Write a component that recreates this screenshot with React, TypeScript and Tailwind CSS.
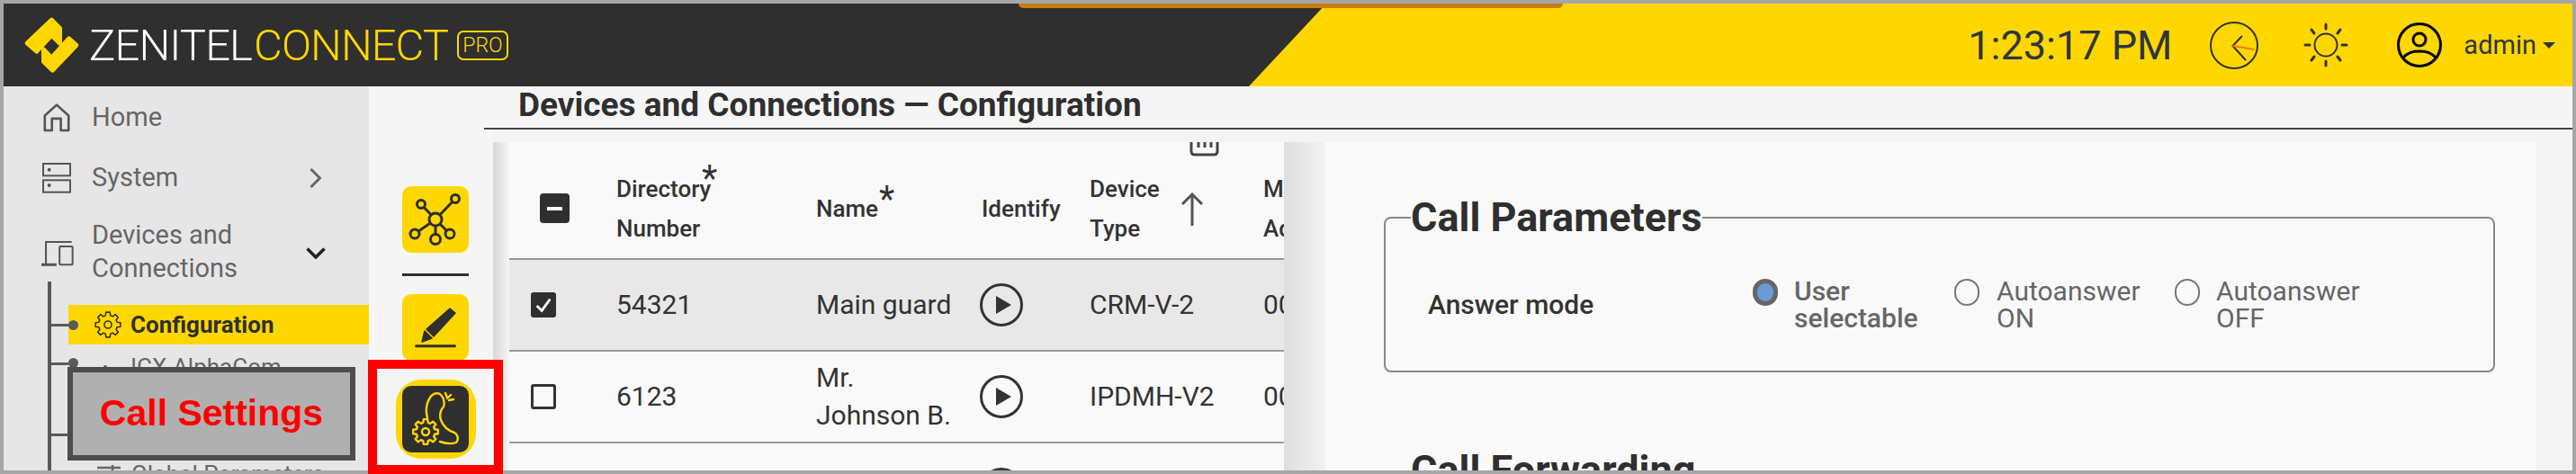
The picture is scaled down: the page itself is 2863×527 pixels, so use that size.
import React from "react";

function gearPath(cx: number, cy: number, ro: number, ri: number, teeth: number) {
  const pts: string[] = [];
  const step = (Math.PI * 2) / teeth;
  for (let i = 0; i < teeth; i++) {
    const a = i * step - Math.PI / 2;
    const seq: [number, number][] = [
      [ri, a - step * 0.34],
      [ro, a - step * 0.2],
      [ro, a + step * 0.2],
      [ri, a + step * 0.34],
    ];
    seq.forEach(([r, t]) => pts.push(`${(cx + r * Math.cos(t)).toFixed(2)} ${(cy + r * Math.sin(t)).toFixed(2)}`));
  }
  return "M" + pts.join(" L") + " Z";
}

const Logo = () => (
  <svg viewBox="0 0 240 228" width={80} height={76} fill="#ffd700" stroke="#ffd700" strokeWidth={14} strokeLinejoin="round" className="flex-none">
    <path d="M30 108 L112 30 L140 58 V110 L112 82 L62 136 Z" />
    <path d="M85 128 L112 156 L170 92 L195 115 L115 199 L85 170 Z" />
  </svg>
);

const ClockIcon = () => (
  <svg viewBox="0 0 54 53" width={54} height={53} fill="none" className="flex-none">
    <ellipse cx={27} cy={26.5} rx={26} ry={25.5} stroke="#333" strokeWidth={2} />
    <path d="M36 16 L25.5 27 L40 43" stroke="#333" strokeWidth={2} />
    <path d="M25.5 27 L49 31" stroke="#f07a10" strokeWidth={2} />
  </svg>
);

const SunIcon = () => (
  <svg viewBox="0 0 50 50" width={50} height={50} fill="none" stroke="#333" strokeLinecap="round" className="flex-none">
    <circle cx={25} cy={25} r={12.5} strokeWidth={2} />
    <path strokeWidth={3} d="M25 2 V7 M25 43 V48 M2 25 H7 M43 25 H48 M9 8 L12 12 M38 38 L41 42 M41 8 L38 12 M12 38 L9 42" />
  </svg>
);

const UserIcon = () => (
  <svg viewBox="0 0 50 50" width={50} height={50} fill="none" stroke="#000" strokeWidth={3} className="flex-none">
    <ellipse cx={25} cy={25} rx={23.5} ry={23.5} />
    <circle cx={25} cy={19} r={7} />
    <path d="M6 40 C12 33 18 32 25 32 C32 32 38 33 44 40" />
  </svg>
);

const HomeIcon = () => (
  <svg viewBox="30 24 96 100" width={32} height={33} fill="none" stroke="#555" strokeWidth={8} strokeLinejoin="round">
    <path d="M38 118 V68 L78 32 L118 68 V118 H92 V78 H62 V118 Z" />
  </svg>
);

const ServerIcon = () => (
  <svg viewBox="26 222 102 108" width={34} height={36} fill="none" stroke="#555" strokeWidth={6}>
    <rect x={32} y={228} width={90} height={40} />
    <rect x={32} y={283} width={90} height={40} />
    <circle cx={52} cy={248} r={3} fill="#555" />
    <circle cx={52} cy={300} r={3} fill="#555" />
  </svg>
);

const DevicesIcon = () => (
  <svg viewBox="22 484 110 86" width={37} height={29} fill="none" stroke="#555" strokeWidth={6}>
    <path d="M40 562 V490 H125" />
    <path d="M25 565 H75" strokeWidth={9} />
    <rect x={85} y={505} width={43} height={60} rx={3} />
  </svg>
);

const Chevron = ({ down }: { down?: boolean }) =>
  down ? (
    <svg viewBox="0 0 22 13" width={22} height={13} fill="none" stroke="#222" strokeWidth={3.5}>
      <path d="M1.5 1.5 L11 11 L20.5 1.5" />
    </svg>
  ) : (
    <svg viewBox="0 0 13 22" width={13} height={22} fill="none" stroke="#666" strokeWidth={3}>
      <path d="M1.5 1 L11.5 11 L1.5 21" />
    </svg>
  );

const GearIcon = ({ color = "#3a3000", size = 30 }: { color?: string; size?: number }) => (
  <svg viewBox="0 0 30 30" width={size} height={size} fill="none" stroke={color} strokeWidth={1.6} strokeLinejoin="round" className="flex-none">
    <path d={gearPath(15, 15, 14, 10.5, 8)} />
    <circle cx={15} cy={15} r={4} />
  </svg>
);

const SlidersIcon = () => (
  <svg viewBox="0 0 26 20" width={26} height={20} fill="none" stroke="#666" strokeWidth={2.5} className="flex-none">
    <path d="M0 3 H26 M0 11 H26 M17 0 V7 M9 8 V15" />
  </svg>
);

const NetworkIcon = () => (
  <svg viewBox="0 0 74 74" width={74} height={74} fill="none" stroke="#2f2f2f" strokeWidth={3}>
    <path d="M37 37 L21 20 M37 37 L59 14 M37 37 L14 53 M37 37 L53 53 M37 37 V59" />
    <circle cx={37} cy={37} r={7} fill="#ffd700" />
    <circle cx={21} cy={20} r={4.5} fill="#ffd700" />
    <circle cx={59} cy={14} r={4.5} fill="#ffd700" />
    <circle cx={14} cy={53} r={5} fill="#ffd700" />
    <circle cx={53} cy={53} r={5} fill="#ffd700" />
    <circle cx={37} cy={59} r={5.5} fill="#ffd700" />
  </svg>
);

const PencilIcon = () => (
  <svg viewBox="0 0 74 74" width={74} height={74} fill="#2f2f2f" stroke="#2f2f2f" strokeWidth={1.5} strokeLinejoin="round">
    <path d="M22 53 L25 41 L33 49 Z" />
    <path d="M27 39 L53 16 L59 21 L35 47 Z" />
    <path d="M15 57 H59 V58.5 H15 Z" />
  </svg>
);

const PhoneGearIcon = () => (
  <svg viewBox="0 0 74 74" width={74} height={74} fill="none" stroke="#ffd700" strokeWidth={2.4} strokeLinecap="round" strokeLinejoin="round">
    <path d="M28 36 C26 28 27 19 31 13 C34 8 40 7 43 10 C47 14 47 20 46 23 C42 28 41 32 43 38 C46 46 52 50 58 52 C62 54 63 60 60 63 C55 65 48 64 42 62" />
    <path d="M48 8 L50 13 M54 10 L50 14 M57 15 L52 16" />
    <path d={gearPath(26, 51, 14, 10.5, 8)} />
    <circle cx={26} cy={51} r={4} />
  </svg>
);

const Play = () => (
  <svg viewBox="0 0 48 48" width={48} height={48} fill="none">
    <circle cx={24} cy={24} r={22.5} stroke="#333" strokeWidth={3} />
    <path d="M18 14 L35 24 L18 34 Z" fill="#333" />
  </svg>
);

const Box = ({ checked }: { checked?: boolean }) =>
  checked ? (
    <span className="flex h-[28px] w-[28px] items-center justify-center rounded-[3px] bg-[#2f2f2f]">
      <svg viewBox="0 0 24 24" width={22} height={22} fill="none" stroke="#fff" strokeWidth={3}>
        <path d="M4 13 L10 19 L20 5" />
      </svg>
    </span>
  ) : (
    <span className="block h-[28px] w-[28px] rounded-[3px] border-[3px] border-[#333] bg-[#f9f9f9]" />
  );

const Radio = ({ on }: { on?: boolean }) =>
  on ? (
    <span className="mt-[1px] block h-[30px] w-[28px] flex-none rounded-full border-[5px] border-[#666] bg-[#6a9bd8]" />
  ) : (
    <span className="mt-[1px] block h-[30px] w-[28px] flex-none rounded-full border-2 border-[#777] bg-[#f9f9f9]" />
  );

const rowGrid = "grid grid-cols-[119px_222px_184px_120px_193px_1fr] items-center";

function TableRow({ checked, name, dir, type, shaded }: { checked?: boolean; name: React.ReactNode; dir: string; type: string; shaded?: boolean }) {
  return (
    <div className={`${rowGrid} h-[102px] flex-none border-b-[2px] border-[#999] text-[30px] leading-[42px] text-[#333] ${shaded ? "bg-[#e8e8e8]" : ""}`}>
      <div className="pl-[24px]">
        <Box checked={checked} />
      </div>
      <div>{dir}</div>
      <div>{name}</div>
      <div className="-ml-[2px]">
        <Play />
      </div>
      <div className="whitespace-nowrap">{type}</div>
      <div className="whitespace-nowrap">00</div>
    </div>
  );
}

export default function App() {
  return (
    <div className="relative h-[527px] w-[2863px] overflow-hidden bg-[#f5f5f5] font-['Roboto',sans-serif]">
      <div className="flex h-full w-full flex-col overflow-hidden border-4 border-[#a6a6a6]">
        {/* Header */}
        <header className="relative flex h-[92px] flex-none items-center bg-[#ffd700]">
          <div className="flex h-full w-[1470px] flex-none items-center bg-[#2f2f2f] pl-[16px] [clip-path:polygon(0_0,100%_0,1384px_100%,0_100%)]">
            <Logo />
            <span className="-ml-[1px] text-[49px] font-light leading-none tracking-[-0.9px] text-white">ZENITEL</span>
            <span className="ml-[2px] text-[49px] font-light leading-none tracking-[-1px] text-[#ffd700]">CONNECT</span>
            <span className="ml-[10px] flex h-[33px] w-[57px] items-center justify-center rounded-[7px] border-2 border-[#ffd700] text-[23px] font-light leading-none text-[#ffd700]">PRO</span>
          </div>
          <div className="absolute left-[1128px] top-0 h-[5px] w-[605px] rounded-b-[8px] bg-[#c97c0c]" />
          <div className="ml-auto flex items-center pr-[19px] text-[#2f3640]">
            <span className="whitespace-nowrap text-[45px] leading-none">1:23:17 PM</span>
            <span className="ml-[42px]">
              <ClockIcon />
            </span>
            <span className="ml-[50px]">
              <SunIcon />
            </span>
            <span className="ml-[54px]">
              <UserIcon />
            </span>
            <span className="ml-[24px] text-[29px] leading-none">admin</span>
            <span className="ml-[7px] h-0 w-0 border-x-[7px] border-t-[7px] border-x-transparent border-t-[#2f3640]" />
          </div>
        </header>

        <div className="flex min-h-0 flex-1">
          {/* Sidebar */}
          <aside className="flex w-[406px] flex-none flex-col bg-[#e6e6e6] text-[29px] leading-[37px] text-[#666]">
            <div className="flex h-[68px] flex-none items-center pl-[40px]">
              <span className="flex w-[38px] justify-center"><HomeIcon /></span>
              <span className="ml-[20px]">Home</span>
            </div>
            <div className="flex h-[67px] flex-none items-center pl-[40px]">
              <span className="flex w-[38px] justify-center"><ServerIcon /></span>
              <span className="ml-[20px]">System</span>
              <span className="ml-auto mr-[53px] flex"><Chevron /></span>
            </div>
            <div className="flex h-[82px] flex-none items-start pl-[40px] pt-[12px]">
              <span className="mt-[24px] flex w-[38px] justify-center"><DevicesIcon /></span>
              <span className="ml-[20px]">Devices and<br />Connections</span>
              <span className="ml-auto mr-[48px] mt-[32px] flex"><Chevron down /></span>
            </div>
            <div className="ml-[49px] flex-1 border-l-4 border-[#5a5a5a] pt-[26px]">
              <div className="flex h-[44px] items-center">
                <span className="h-[3px] w-[19px] bg-[#5a5a5a]" />
                <span className="flex h-full flex-1 items-center bg-[#ffd700]">
                  <span className="h-[11px] w-[11px] flex-none rounded-full bg-[#5a5a5a]" />
                  <span className="ml-[18px]"><GearIcon /></span>
                  <span className="ml-[10px] text-[26px] font-bold text-[#2f2f2f]">Configuration</span>
                </span>
              </div>
              <div className="flex h-[78px] items-start pt-[15px]">
                <span className="mt-[5px] h-[3px] w-[19px] bg-[#5a5a5a]" />
                <span className="h-[11px] w-[11px] flex-none rounded-full bg-[#5a5a5a]" />
                <span className="ml-[28px] mt-[8px] h-[4px] w-[4px] flex-none rounded-full bg-[#5a5a5a]" />
                <span className="-mt-[8px] ml-[26px] text-[26px]">ICX-AlphaCom</span>
              </div>
              <div className="flex h-[44px] items-center">
                <span className="h-[3px] w-[19px] bg-[#5a5a5a]" />
              </div>
              <div className="flex h-[44px] items-center pl-[51px] text-[26px]">
                <span className="w-[38px]"><SlidersIcon /></span>
                <span>Global Parameters</span>
              </div>
            </div>
          </aside>

          {/* Toolbar */}
          <nav className="flex w-[128px] flex-none flex-col items-center pl-[20px] pt-[111px]">
            <div className="h-[74px] w-[74px] flex-none rounded-[10px] bg-[#ffd700]"><NetworkIcon /></div>
            <div className="mt-[23px] h-[3px] w-[74px] flex-none bg-[#2f2f2f]" />
            <div className="mt-[20px] h-[74px] w-[74px] flex-none rounded-[10px] bg-[#ffd700]"><PencilIcon /></div>
            <div className="mt-[21px] flex h-[88px] w-[89px] flex-none items-center justify-center rounded-[28px] bg-[#ffd700]">
              <div className="h-[74px] w-[74px] rounded-[10px] bg-[#2f2f2f]"><PhoneGearIcon /></div>
            </div>
          </nav>

          {/* Main */}
          <main className="flex min-w-0 flex-1 flex-col">
            <div className="h-[48px] flex-none border-b-[2px] border-[#444] pl-[38px] shadow-[inset_0_-2px_0_#fff]">
              <h1 className="text-[37px] font-bold leading-[42px] text-[#2f2f2f]">Devices and Connections — Configuration</h1>
            </div>
            <div className="ml-[10px] flex min-h-0 flex-1 flex-col">
              <div className="h-[14px] flex-none bg-[#f3f3f3]" />
              <div className="flex min-h-0 flex-1">
                <div className="w-[18px] flex-none bg-gradient-to-r from-[#d8d8d8] to-[#f4f4f4]" />
                {/* Table */}
                <section className="flex w-[861px] flex-none flex-col overflow-hidden bg-[#f9f9f9]">
                  <div className={`${rowGrid} relative h-[131px] flex-none border-b-[2px] border-[#999] pt-[18px] text-[26px] font-medium leading-[44px] text-[#333]`}>
                    <div className="pl-[34px]">
                      <span className="flex h-[33px] w-[33px] items-center justify-center rounded-[4px] bg-[#2f2f2f]">
                        <span className="h-[4px] w-[17px] bg-white" />
                      </span>
                    </div>
                    <div className="relative">
                      Directory<br />Number
                      <span className="absolute left-[95px] -top-[11px] text-[40px] font-normal leading-[44px]">*</span>
                    </div>
                    <div className="relative">
                      Name
                      <span className="absolute left-[70px] -top-[10px] text-[40px] font-normal leading-[44px]">*</span>
                    </div>
                    <div>Identify</div>
                    <div className="flex items-center">
                      <span>Device<br />Type</span>
                    </div>
                    <div className="whitespace-nowrap">
                      <span className="block w-[23px] overflow-hidden">Ma</span>
                      <span className="block w-[23px] overflow-hidden">Ad</span>
                    </div>
                    <svg viewBox="0 0 33 16" width={33} height={16} fill="none" stroke="#444" strokeWidth={3} className="absolute left-[756px] top-0">
                      <path d="M2 0 V10 Q2 14 6 14 H27 Q31 14 31 10 V0 M10 0 V6 M17 0 V6 M24 0 V6" />
                    </svg>
                    <svg viewBox="0 0 26 38" width={26} height={38} fill="none" stroke="#555" strokeWidth={3} className="absolute left-[746px] top-[56px]">
                      <path d="M13 37 V2 M2 13 L13 2 L24 13" />
                    </svg>
                  </div>
                  <TableRow shaded checked dir="54321" name="Main guard" type="CRM-V-2" />
                  <TableRow dir="6123" name={<>Mr.<br />Johnson B.</>} type="IPDMH-V2" />
                  <div className={`${rowGrid} h-[102px] flex-none`}>
                    <div /><div /><div />
                    <div className="-ml-[2px]"><Play /></div>
                  </div>
                </section>
                <div className="w-[46px] flex-none bg-gradient-to-r from-[#dedede] to-[#f2f2f2]" />
                {/* Settings */}
                <section className="w-[1345px] flex-none overflow-hidden bg-[#f9f9f9] pl-[65px] pr-[45px] pt-[60px]">
                  <fieldset className="h-[196px] rounded-[8px] border-2 border-[#888] pl-[47px] pr-[10px]">
                    <legend className="-ml-[19px] text-[45px] font-bold leading-[48px] text-[#2f2f2f]">Call Parameters</legend>
                    <div className="grid grid-cols-[361px_224px_245px_1fr] pt-[43px] text-[30px] leading-[30px] text-[#666]">
                      <div className="pt-[15px] font-medium text-[#333]">Answer mode</div>
                      <div className="flex gap-[18px] font-medium"><Radio on /><span>User<br />selectable</span></div>
                      <div className="flex gap-[19px]"><Radio /><span>Autoanswer<br />ON</span></div>
                      <div className="flex gap-[18px]"><Radio /><span>Autoanswer<br />OFF</span></div>
                    </div>
                  </fieldset>
                  <h2 className="ml-[30px] mt-[85px] text-[45px] font-bold leading-[48px] text-[#2f2f2f]">Call Forwarding</h2>
                </section>
                <div className="flex-1 bg-[#f3f3f3]" />
              </div>
            </div>
          </main>
        </div>
      </div>

      {/* Callouts */}
      <div className="absolute left-[75px] top-[408px] flex h-[104px] w-[320px] items-center justify-center border-[6px] border-[#4d4d4d] bg-[#b0b0b0] font-['Liberation_Sans',sans-serif] text-[41px] font-bold text-[#ff0000]">
        Call Settings
      </div>
      <div className="absolute left-[409px] top-[400px] h-[127px] w-[150px] border-[10px] border-[#ff0000]" />
    </div>
  );
}
